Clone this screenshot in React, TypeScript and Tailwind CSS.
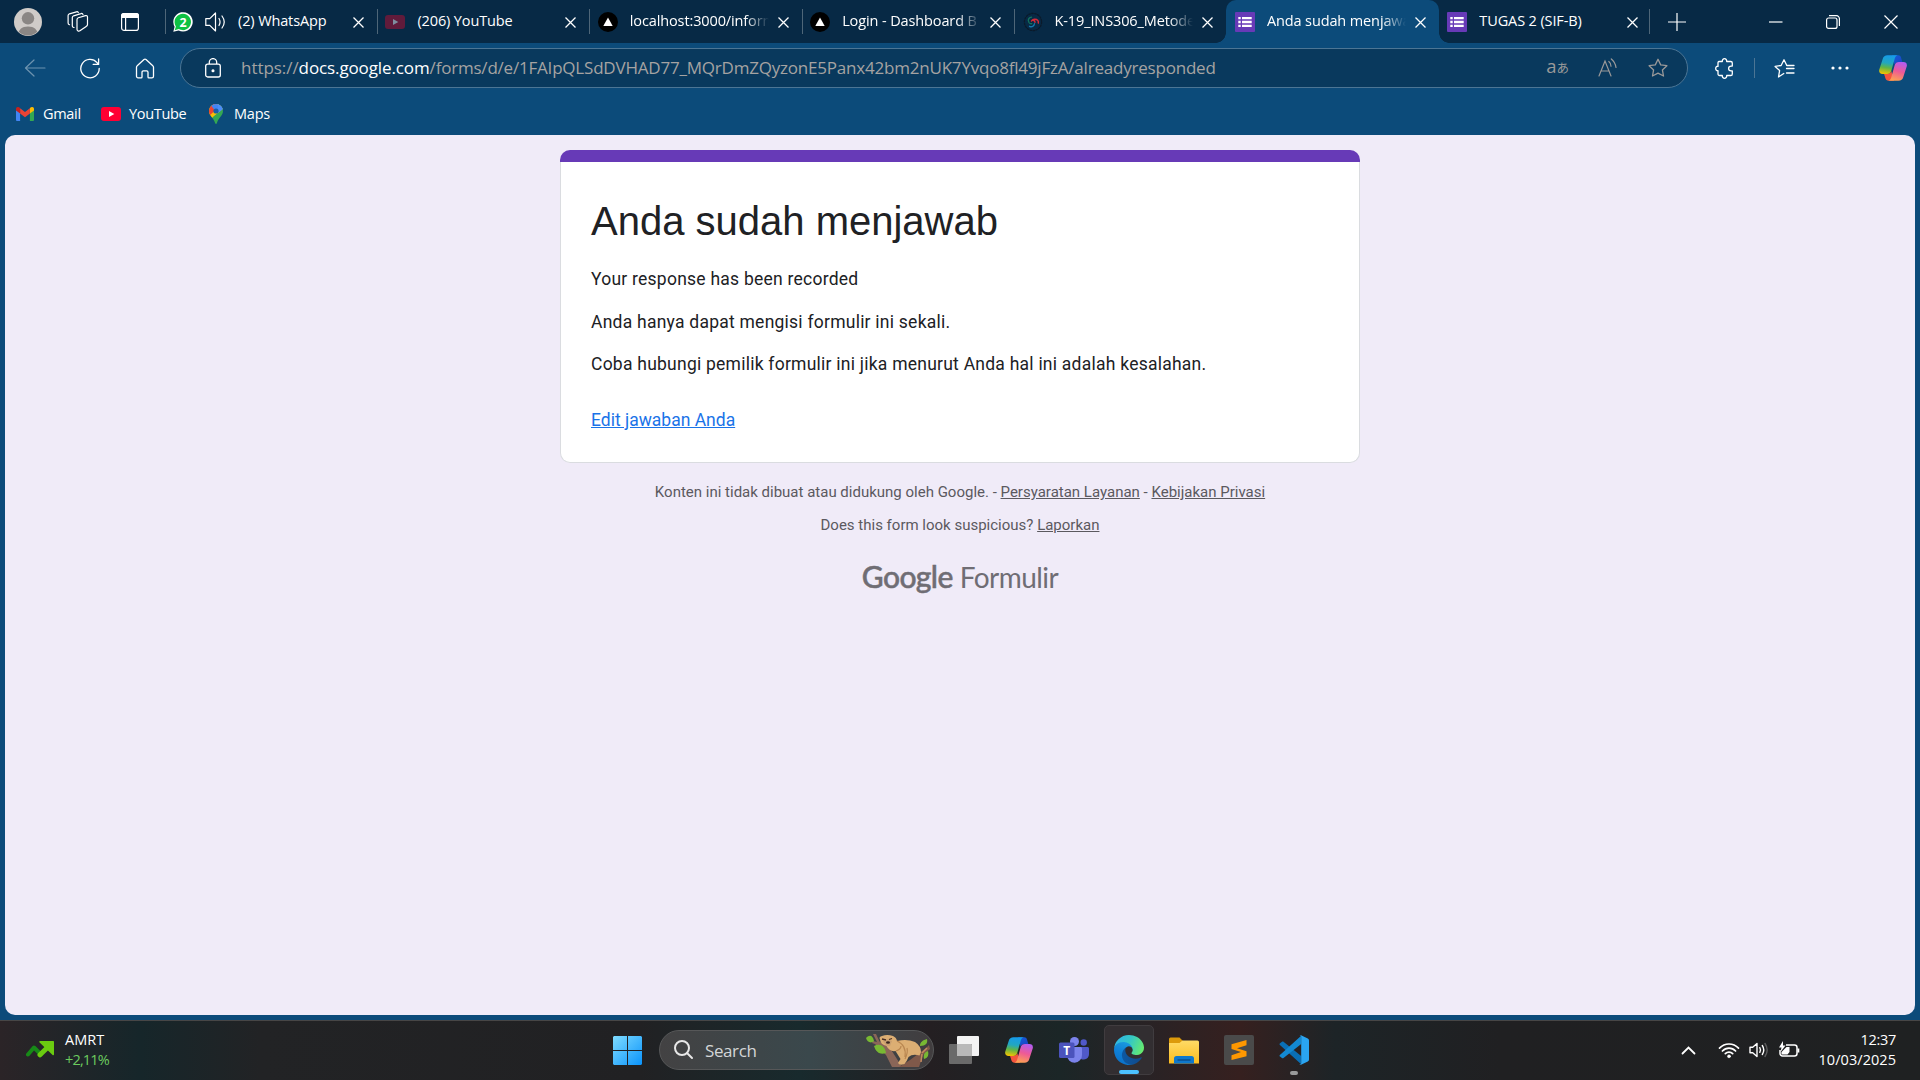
import React from "react";

const UI = "font-['Open_Sans','Noto_Sans','Noto_Sans_CJK_JP',sans-serif]";

function Close() {
  return (
    <svg width="11" height="11" viewBox="0 0 11 11" stroke="#fff" strokeWidth="1.3" fill="none">
      <path d="M.5.5l10 10M10.5.5l-10 10" />
    </svg>
  );
}

function WhatsApp() {
  return (
    <svg width="20" height="20" viewBox="0 0 20 20">
      <path d="M.3 19.700l1.300-5A9.700 9.700 0 1 1 5.600 18.500z" fill="#fff" />
      <path d="M1.700 18.300l1.200-3.900A8.200 8.200 0 1 1 5.800 17.100z" fill="#0dc143" />
      <text x="10" y="14.500" textAnchor="middle" fontSize="12.500" fontWeight="700" fill="#fff" fontFamily="Open Sans, sans-serif">2</text>
    </svg>
  );
}
function Speaker() {
  return (
    <svg width="21" height="20" viewBox="0 0 21 20" fill="none" stroke="#fff" strokeWidth="1.200" strokeLinejoin="round" strokeLinecap="round">
      <path d="M.8 6.600h4L10.500 1v18l-5.700-5.600h-4z" />
      <path d="M14 6.500c1.300 2.200 1.300 4.800 0 7M17 4c2.700 3.600 2.700 8.400 0 12" />
    </svg>
  );
}
function YouTube({ dim = false }: { dim?: boolean }) {
  return (
    <svg width="20" height="14" viewBox="0 0 20 14">
      <rect width="20" height="14" rx="3" fill={dim ? "#611b3b" : "#ff0033"} />
      <path d="M8 4l5.300 3L8 10z" fill={dim ? "#7f8ea0" : "#fff"} />
    </svg>
  );
}
function Next() {
  return (
    <svg width="20" height="20" viewBox="0 0 20 20">
      <circle cx="10" cy="10" r="10" fill="#000" />
      <path d="M10 5.500l4.700 8.500H5.300z" fill="#fff" />
    </svg>
  );
}
function Swirl() {
  return (
    <svg width="20" height="20" viewBox="0 0 20 20" fill="none" strokeLinecap="round">
      <circle cx="10" cy="10" r="8.600" stroke="#0b1a2a" strokeWidth="1.300" strokeDasharray="1.500 1.500" />
      <path d="M8.500 5.200C5.500 5.800 4.500 8 6 10.500c.6.900 1.700 1.400 2.800 1.200" stroke="#11735c" strokeWidth="1.300" />
      <path d="M8.500 9c1-2 4.500-2.600 6.300-.6.700.8.700 1.700.5 2.600M10.300 8.300c1.100.2 1.700.9 1.700 1.900" stroke="#d42a38" strokeWidth="1.500" />
      <path d="M6.500 14.300c2.300 1.200 4.600-.1 5-2.600" stroke="#1478ad" strokeWidth="1.300" />
    </svg>
  );
}
function Forms() {
  return (
    <svg width="20" height="20" viewBox="0 0 20 20">
      <rect width="20" height="20" rx="1" fill="#673ab7" />
      <path d="M3.300 5h2.400v2.300H3.300zM7 5h9.700v2.300H7zM3.300 8.800h2.400v2.400H3.300zM7 8.800h9.700v2.400H7zM3.300 12.700h2.400V15H3.300zM7 12.700h9.700V15H7z" fill="#fff" />
    </svg>
  );
}

type TabProps = { icon: React.ReactNode; title: string; active?: boolean; audio?: boolean; sep?: boolean; fade?: boolean };
function Tab({ icon, title, active, audio, sep = true, fade }: TabProps) {
  return (
    <div className={"relative flex h-[43px] w-[212.400px] shrink-0 items-center " + (active ? "rounded-t-[10px] bg-[#0c4b7a]" : "")}>
      {active && (
        <>
          <span className="absolute bottom-0 -left-[10px] size-[10px] bg-[radial-gradient(circle_at_0_0,transparent_9.500px,#0c4b7a_10px)]" />
          <span className="absolute -right-[10px] bottom-0 size-[10px] bg-[radial-gradient(circle_at_100%_0,transparent_9.500px,#0c4b7a_10px)]" />
        </>
      )}
      <span className={"h-[25px] w-px " + (sep && !active ? "bg-[#4e6678]" : "")} />
      <span className="ml-[7.500px] flex w-5 justify-center">{icon}</span>
      {audio && <span className="ml-3"><Speaker /></span>}
      <span className={"-mt-px ml-[12px] flex-1 overflow-hidden whitespace-nowrap text-[14.500px] leading-[22px] tracking-[-0.120px] text-white " + (fade ? "[mask-image:linear-gradient(to_right,#000_calc(100%-24px),transparent)]" : "")}>
        {title}
      </span>
      <span className="ml-[9px] mr-[13px] mt-px"><Close /></span>
    </div>
  );
}

function Copilot({ id, w = 28 }: { id: string; w?: number }) {
  return (
    <svg width={w} height={(w * 26) / 28} viewBox="0 0 28 26">
      <defs>
        <linearGradient id={id + "a"} x1=".4" y1="0" x2=".25" y2="1">
          <stop offset="0" stopColor="#169be8" /><stop offset=".4" stopColor="#22a7c0" /><stop offset=".65" stopColor="#5fb548" /><stop offset="1" stopColor="#f5c400" />
        </linearGradient>
        <linearGradient id={id + "b"} x1=".7" y1="0" x2=".4" y2="1">
          <stop offset="0" stopColor="#b35cf0" /><stop offset=".5" stopColor="#ee5a96" /><stop offset="1" stopColor="#fda054" />
        </linearGradient>
        <linearGradient id={id + "c"} x1="0" y1="0" x2="1" y2="1">
          <stop offset="0" stopColor="#1560d8" /><stop offset="1" stopColor="#1b3fc4" />
        </linearGradient>
      </defs>
      <path d="M13 .3h6.200c1.500 0 2.400.8 2.800 2.200l1.300 4.600h-4c-2 0-3 1-3.600 2.800z" fill={"url(#" + id + "c)"} />
      <path d="M15 25.700H9.500c-1.700 0-2.600-1-3.100-2.500L5 18.700h3.500c2 0 3.200-1 3.800-2.800z" fill="#f5553d" />
      <path d="M8.500.3h10.200c-1.700.4-2.500 1.700-3 3.500l-3.300 11.700c-.7 2.300-2 3.400-4.300 3.400H3.600c-2.700 0-4-1.700-3.300-4.500L3.700 4C4.400 1.500 6 .3 8.500.3z" fill={"url(#" + id + "a)"} />
      <path d="M19.900 7.100h4.500c2.700 0 4 1.700 3.300 4.500L24.300 22c-.7 2.500-2.300 3.700-4.800 3.700H9.300c1.700-.4 2.500-1.700 3-3.500l3.300-11.700c.7-2.300 2-3.400 4.300-3.400z" fill={"url(#" + id + "b)"} />
    </svg>
  );
}

function Sloth() {
  return (
    <svg width="64" height="33" viewBox="0 0 64 33">
      <path d="M7 0h3l3.500 7.500L24 14l12 19H26l-6-12L9 10l-3-1 1-2 4 1z" fill="#8a6658" />
      <path d="M33 33l11-7 16-12 3-3 1 4-7 6-4 12z" fill="#80594a" />
      <path d="M56 20l-1 8M61 14l-5 5" stroke="#c28a60" strokeWidth="1.500" fill="none" />
      <path d="M14 5.500q-1.500-3 2-3.500 5-2 11 0 3.500 1.500 4 5 10-2.500 18 1 6 4 6 10l-1.500 3.500q-7-2-11 1.500-1.500 4-4 7-5 2-6.500-1l2.500-4-5-8q-6 1-9-5-6-1.500-6.500-6.500z" fill="#dcae73" />
      <path d="M31 7c7 3 9 9 8 16M41 14c1 4 0 7-2 11M30 17c3-1 5-3 5-5" fill="none" stroke="#b98650" strokeWidth="1.200" />
      <path d="M17 7q4-3 9 0l-2 5q-4 1-7-5z" fill="#c99f70" />
      <path d="M16 5l4 1M23 5.500l3-1" stroke="#4a3026" strokeWidth="1.300" />
      <ellipse cx="22" cy="8.500" rx="2" ry="1.300" fill="#3b2520" />
      <path d="M0 4c4-4 7-2 8 3-3 3-7 1-8-3zM8 12c6-3 11 0 12 7-5 2-10 0-12-7zM54 12c0-4 3-6 7-7 1 4-1 7-7 7zM58 25c-1-5 1-7 4-8 1 4 0 7-4 8z" fill="#78b833" />
    </svg>
  );
}

function Teams() {
  return (
    <svg width="30" height="26" viewBox="0 0 30 26">
      <circle cx="15.500" cy="4.500" r="4.500" fill="#7b83eb" />
      <circle cx="24.700" cy="5.500" r="3.200" fill="#5059c9" />
      <path d="M20 10h8.500c.8 0 1.500.7 1.500 1.500v5.500a5.500 5.500 0 0 1-8 5z" fill="#5059c9" />
      <path d="M9 10h12.500c.8 0 1.500.7 1.500 1.500V18a7.500 7.500 0 0 1-15 .5z" fill="#7b83eb" />
      <rect y="5.500" width="15.500" height="15.500" rx="1.500" fill="#4b53bc" />
      <text x="7.700" y="17.600" textAnchor="middle" fontSize="12" fontWeight="700" fill="#fff" fontFamily="Open Sans, sans-serif">T</text>
    </svg>
  );
}

function Edge() {
  return (
    <svg width="30" height="30" viewBox="0 0 256 256">
      <defs>
        <linearGradient id="e1" x1="0" y1=".5" x2="1" y2=".5"><stop offset="0" stopColor="#0c59a4" /><stop offset="1" stopColor="#114a8b" /></linearGradient>
        <linearGradient id="e2" x1=".6" y1="0" x2=".3" y2="1"><stop offset="0" stopColor="#1b9de2" /><stop offset=".5" stopColor="#0f7fd6" /><stop offset="1" stopColor="#0a6fc6" /></linearGradient>
        <linearGradient id="e3" x1="0" y1=".3" x2="1" y2=".6"><stop offset="0" stopColor="#2fb5e8" /><stop offset=".5" stopColor="#35c8c4" /><stop offset="1" stopColor="#66eb6e" /></linearGradient>
      </defs>
      <path d="M231 190.500c-3.400 1.800-6.900 3.400-10.500 4.700a101 101 0 0 1-35.900 6.500c-47.300 0-88.500-32.500-88.500-74.300.1-11.400 6.400-21.900 16.400-27.300-42.800 1.800-53.800 46.400-53.800 72.500 0 73.900 68.100 81.400 82.800 81.400 7.900 0 19.800-2.300 27-4.600l1.300-.4a128.300 128.300 0 0 0 66.600-52.800 4 4 0 0 0-5.400-5.700z" fill="url(#e1)" />
      <path d="M105.700 241.400a79.200 79.200 0 0 1-22.700-21.300 80.700 80.700 0 0 1 29.500-120c3.200-1.500 8.500-4.100 15.600-4a32.400 32.400 0 0 1 25.700 13 31.900 31.900 0 0 1 6.300 18.700c0-.2 24.500-79.600-80-79.600C36.200 48.200.1 89.900.1 126.600a130 130 0 0 0 12.100 56 128 128 0 0 0 156.400 67.100 75.500 75.500 0 0 1-62.800-8z" fill="url(#e2)" />
      <path d="M152.300 148.900c-.9 1-3.400 2.500-3.400 5.600 0 2.600 1.700 5.200 4.800 7.300 14.400 10.100 41.600 8.700 41.700 8.700 10.700 0 21.200-2.900 30.400-8.300A61.800 61.800 0 0 0 256 109c.3-22.400-8-37.300-11.300-43.900C223.500 23.900 177.700 0 128 0A128 128 0 0 0 0 126.200c.5-36.500 36.800-66 80-66 3.500 0 23.500.3 42 10 16.300 8.500 24.900 18.900 30.800 29.200 6.200 10.700 7.300 24.100 7.300 29.500 0 5.300-2.700 13.300-7.800 20z" fill="url(#e3)" />
    </svg>
  );
}

function Folder() {
  return (
    <svg width="30" height="27" viewBox="0 0 30 27">
      <defs><linearGradient id="fo" x1="0" y1="0" x2="0" y2="1"><stop offset="0" stopColor="#ffdb66" /><stop offset="1" stopColor="#fbbc1f" /></linearGradient></defs>
      <path d="M0 2a1.500 1.500 0 0 1 1.500-1.500h9L14 4H29v6H0z" fill="#dc9a0b" />
      <path d="M0 6h10.500L13.500 3.500H28.500A1.500 1.500 0 0 1 30 5v21.500H0z" fill="url(#fo)" />
      <path d="M5 26.500v-5A2.500 2.500 0 0 1 7.500 19h15a2.500 2.500 0 0 1 2.500 2.500v5z" fill="#0f78cc" />
      <path d="M8.500 23h13" stroke="#0a4a86" strokeWidth="1.300" />
    </svg>
  );
}

function VSCode() {
  return (
    <svg width="30" height="30" viewBox="0 0 30 30">
      <path d="M1 8.300l2-1.500c.5-.4 1-.3 1.500 0L22.200 21v8.300L.9 10c-.6-.6-.5-1.200.1-1.700z" fill="#0a6fb5" />
      <path d="M1 21.500l2 1.600c.5.4 1 .3 1.500 0L22.200 9V.7L.9 20c-.6.600-.5 1.100.1 1.500z" fill="#1389d2" />
      <path d="M22 .3L28.800 3.500c.8.400 1.200 1 1.200 1.900v19.200c0 .9-.4 1.500-1.200 1.900L22 29.700c-.8.300-1.500 0-2-.5 1 .6 2.200.1 2.200-1.200V2c0-1.300-1.200-1.800-2.200-1.200.5-.6 1.200-.8 2-.5z" fill="#2aa5f2" />
    </svg>
  );
}

const star = "M10 1.300l2.700 5.600 6.200.8-4.500 4.200 1.100 6.100L10 15.100 4.500 18l1.100-6.100L1.100 7.700l6.200-.8z";

export default function App() {
  return (
    <div className={"flex h-[1080px] w-[1920px] flex-col overflow-hidden bg-[#0c4b7a] text-white " + UI}>
      <header className="flex h-[43px] shrink-0 items-center bg-[#072945]">
        <svg className="ml-[14px] shrink-0" width="28" height="28" viewBox="0 0 28 28">
          <defs><clipPath id="av"><circle cx="14" cy="14" r="13.500" /></clipPath></defs>
          <circle cx="14" cy="14" r="14" fill="#cfcbc8" />
          <g clipPath="url(#av)" fill="#8a8684"><circle cx="14" cy="10.300" r="6.200" /><path d="M4 28c0-6.500 4-9.500 10-9.500s10 3 10 9.500z" /></g>
        </svg>
        <svg className="ml-[25px] shrink-0" width="22" height="22" viewBox="0 0 22 22" fill="none" stroke="#fff" strokeWidth="1.200" strokeLinejoin="round" strokeLinecap="round">
          <path d="M11.300 6.800l7.200-2.200c1-.3 2 .4 2 1.500v7.500c0 .8-.5 1.500-1.300 1.800l-6.300 4.400c-1.200.8-2.900 0-2.900-1.500V8.600c0-.8.500-1.500 1.300-1.800z" />
          <path d="M7 16.500l-.8-.3c-.6-.3-.9-.8-.9-1.400V6.600c0-.8.500-1.500 1.300-1.800L14 2.600c.9-.3 1.700.1 2 1M2.500 13.700c-.9-.3-1.400-.8-1.400-1.700V4.600c0-.8.500-1.500 1.300-1.800L9.500.8c.8-.2 1.400 0 1.800.7" />
        </svg>
        <svg className="ml-[32px] shrink-0" width="18" height="18" viewBox="0 0 18 18">
          <rect x=".6" y=".6" width="16.800" height="16.800" rx="2.500" fill="none" stroke="#fff" strokeWidth="1.200" />
          <path d="M0 5V2.500A2.500 2.500 0 0 1 2.500 0h13A2.500 2.500 0 0 1 18 2.500V5zM4 5h1.200v12.500H4z" fill="#fff" />
        </svg>
        <nav className="ml-[25.500px] flex">
          <Tab icon={<WhatsApp />} title="(2) WhatsApp" audio />
          <Tab icon={<YouTube dim />} title="(206) YouTube" />
          <Tab icon={<Next />} title="localhost:3000/inform" fade />
          <Tab icon={<Next />} title="Login - Dashboard B" fade />
          <Tab icon={<Swirl />} title="K-19_INS306_Metode" fade />
          <Tab icon={<Forms />} title="Anda sudah menjawab" active fade />
          <Tab icon={<Forms />} title="TUGAS 2 (SIF-B)" sep={false} />
        </nav>
        <span className="-ml-[2.500px] h-[25px] w-px bg-[#4e6678]" />
        <svg className="ml-[18px] shrink-0" width="18" height="18" viewBox="0 0 18 18" stroke="#fff" strokeWidth="1.200"><path d="M9 0v18M0 9h18" /></svg>
        <div className="ml-auto flex items-center">
          <svg className="mr-[43px]" width="14" height="13" viewBox="0 0 14 13"><path d="M0 7h13.500" stroke="#fff" strokeWidth="1.200" /></svg>
          <svg className="mr-[44px]" width="14" height="14" viewBox="0 0 14 14" fill="none" stroke="#fff" strokeWidth="1.200">
            <rect x=".6" y="3" width="10.400" height="10.400" rx="2" /><path d="M3 .7h7.500a2.900 2.900 0 0 1 2.900 2.900v7.400" />
          </svg>
          <svg className="mr-[22px]" width="14" height="14" viewBox="0 0 14 14" stroke="#fff" strokeWidth="1.200"><path d="M.5.5l13 13M13.500.5l-13 13" /></svg>
        </div>
      </header>

      <div className="flex h-[50px] shrink-0 items-center">
        <svg className="ml-[24px] shrink-0" width="22" height="20" viewBox="0 0 22 20" fill="none" stroke="#6d93af" strokeWidth="1.200" strokeLinecap="round" strokeLinejoin="round"><path d="M10 2L1.500 10l8.500 8M1.500 10H21" /></svg>
        <svg className="ml-[34px] shrink-0" width="20" height="21" viewBox="0 0 20 21" fill="none" stroke="#fff" strokeWidth="1.300" strokeLinecap="round" strokeLinejoin="round"><path d="M19.200 10.500A9.200 9.200 0 1 1 17 4.600L18.500 6.300M18.600 1v5.400h-5.400" /></svg>
        <svg className="ml-[35px] shrink-0" width="20" height="21" viewBox="0 0 20 21" fill="none" stroke="#fff" strokeWidth="1.300" strokeLinejoin="round"><path d="M1.500 9.300c0-.6.200-1.100.7-1.500L9 1.600c.6-.5 1.400-.5 2 0l6.800 6.200c.5.400.7.900.7 1.500v8.900c0 .9-.7 1.600-1.600 1.600h-3c-.5 0-.9-.4-.9-.9v-4.700c0-.8-.6-1.400-1.400-1.400H8.400c-.8 0-1.400.6-1.400 1.400v4.700c0 .5-.4.9-.9.9h-3c-.9 0-1.600-.7-1.600-1.600z" /></svg>
        <div className="ml-[25px] flex h-[40px] w-[1508px] shrink-0 items-center rounded-full border border-[#4c7594] bg-[#09395d]">
          <svg className="ml-[24px] shrink-0" width="16" height="20" viewBox="0 0 16 20" fill="none" stroke="#fff" strokeWidth="1.300"><rect x=".7" y="6.200" width="14.600" height="12.800" rx="2" /><path d="M4.300 6V4.300a3.700 3.700 0 0 1 7.400 0V6" /><circle cx="8" cy="12.700" r=".9" fill="#fff" /></svg>
          <p className="ml-[20px] whitespace-nowrap text-[17px] leading-6 text-[#a5a3a2]">
            <span className="tracking-[-0.050px]">https://</span><span className="tracking-[-0.110px] text-white">docs.google.com</span><span className="tracking-[-0.205px]">/forms/d/e/1FAIpQLSdDVHAD77_MQrDmZQyzonE5Panx42bm2nUK7Yvqo8fl49jFzA/alreadyresponded</span>
          </p>
          <div className="ml-auto flex shrink-0 items-center text-[#9a9999]">
            <span className="-mt-[3px] mr-[29px] flex items-baseline leading-5"><span className="text-[18.500px]">a</span><span className="font-['Noto_Sans_CJK_JP',sans-serif] text-[12.500px]">あ</span></span>
            <svg className="mr-[30px]" width="20" height="20" viewBox="0 0 20 20" fill="none" stroke="#9a9999" strokeWidth="1.200" strokeLinecap="round"><path d="M1 18L7 3l6 15M3 13h8M10.800 3.500c1.500 1.200 2.200 2.800 2.200 4.700M13.300 1c2.700 2.200 4.200 5 4.700 8.500" /></svg>
            <svg className="mr-[19px]" width="20" height="20" viewBox="0 0 20 20" fill="none" stroke="#9a9999" strokeWidth="1.300" strokeLinejoin="round"><path d={star} /></svg>
          </div>
        </div>
        <svg className="ml-[27px] shrink-0" width="20" height="21" viewBox="0 0 20 21" fill="none" stroke="#fff" strokeWidth="1.300" strokeLinejoin="round"><path d="M4 3.500h3.300c-.2-1.700.9-2.800 2.200-2.800s2.400 1.100 2.200 2.800h4c1 0 1.600.7 1.600 1.600v3h-1.200c-1.500 0-2.500 1-2.500 2.400s1 2.400 2.500 2.400h1.200v3c0 1-.7 1.600-1.600 1.600h-4c.2 1.700-.9 2.800-2.200 2.800s-2.400-1.100-2.200-2.800H4.600c-1 0-1.600-.7-1.600-1.600v-3.200C1.700 12.900.7 11.900.7 10.500S1.700 8.100 3 8.300V5.100c0-.9.400-1.600 1-1.600z" /></svg>
        <span className="ml-[19px] h-5 w-px bg-[#4c7594]" />
        <svg className="ml-[19px] shrink-0" width="21" height="21" viewBox="0 0 21 21" fill="none" stroke="#fff" strokeWidth="1.300" strokeLinejoin="round" strokeLinecap="round"><path d="M9.800 15L4.500 18.500l1.100-6.400L1.100 7.900l6-.9L10 1.300l2.800 5.700h.7M12.500 10H20M12.500 14.500H20M12.500 6.800l7.500.2" transform="translate(0 .5)" /></svg>
        <svg className="ml-[35.500px] shrink-0" width="18" height="4" viewBox="0 0 18 4" fill="#fff"><circle cx="2" cy="2" r="1.600" /><circle cx="9" cy="2" r="1.600" /><circle cx="16" cy="2" r="1.600" /></svg>
        <span className="ml-[30px] shrink-0"><Copilot id="c1" /></span>
      </div>

      <div className="flex h-[42px] shrink-0 items-center pb-px text-[14.500px] leading-5">
        <svg className="ml-[16px]" width="18" height="14" viewBox="0 0 18 14">
          <path d="M0 2.500v10.200c0 .7.500 1.300 1.200 1.300h2.900V6z" fill="#4285f4" /><path d="M13.900 14h2.900c.7 0 1.200-.6 1.200-1.300V2.500L13.900 6z" fill="#34a853" />
          <path d="M13.900 1.200V6.500L18 3.400V2c0-2-2.100-2.600-3.500-1.400z" fill="#fbbc04" /><path d="M4.100 6.500V1.200L9 4.900l4.900-3.700v5.300L9 10.200z" fill="#ea4335" /><path d="M0 2v1.400l4.100 3.100V1.200L3.500.6C2.100-.6 0 0 0 2z" fill="#c5221f" />
        </svg>
        <span className="ml-[9px] w-[58px] tracking-[-0.300px]">Gmail</span>
        <YouTube />
        <span className="ml-[8px] w-[80px] tracking-[-0.330px]">YouTube</span>
        <svg width="14" height="20" viewBox="0 0 14 20">
          <defs><clipPath id="pin"><path d="M7 0a7 7 0 0 1 7 7c0 4.500-4 6-6.200 12.200-.3 1-1.300 1-1.600 0C4 13 0 11.500 0 7a7 7 0 0 1 7-7z" /></clipPath></defs>
          <g clipPath="url(#pin)"><path d="M0 0h14v20H0z" fill="#34a853" /><path d="M0 0h14v5L5 12l-3 3-2-2z" fill="#fbbc04" /><path d="M0 0h8L4.500 8 1 11H0z" fill="#ea4335" /><path d="M2 1.500L4 0h10v5L8 9z" fill="#4285f4" /><path d="M9 0l5 0v5L9 9z" fill="#4a8df8" /></g>
          <circle cx="7" cy="7" r="2.600" fill="#1a5ea8" />
        </svg>
        <span className="ml-[11px] tracking-[-0.200px]">Maps</span>
      </div>

      <main className="mx-[5px] flex h-[880px] shrink-0 flex-col items-center rounded-[10px] bg-[#f0ebf8] font-[Roboto,sans-serif]">
        <section className="mt-[15px] h-[313px] w-[800px] shrink-0">
          <div className="h-[12px] rounded-t-[10px] bg-[#673ab7]" />
          <div className="flex h-[301px] flex-col items-start rounded-b-[10px] border border-t-0 border-[#dadce0] bg-white px-[30px] text-[17.500px] leading-[25px] text-[#202124]">
            <h1 className="mt-[34px] font-['Liberation_Sans',Arial,sans-serif] text-[40px] leading-[50px]">Anda sudah menjawab</h1>
            <p className="mt-[21px] tracking-[0.240px]">Your response has been recorded</p>
            <p className="mt-[18px] tracking-[0.240px]">Anda hanya dapat mengisi formulir ini sekali.</p>
            <p className="mt-[17px] tracking-[0.240px]">Coba hubungi pemilik formulir ini jika menurut Anda hal ini adalah kesalahan.</p>
            <a className="mt-[31px] text-[#1a73e8] underline">Edit jawaban Anda</a>
          </div>
        </section>
        <p className="mt-[17px] text-[15px] leading-6 text-[#5b595f]">Konten ini tidak dibuat atau didukung oleh Google. - <a className="underline">Persyaratan Layanan</a> - <a className="underline">Kebijakan Privasi</a></p>
        <p className="mt-[9px] text-[15px] leading-6 text-[#5b595f]">Does this form look suspicious? <a className="underline">Laporkan</a></p>
        <div className="mt-[17px] flex items-baseline gap-[7px] font-[Lato,sans-serif] leading-[44px] text-[#6f6d74]">
          <span className="text-[30px] font-medium tracking-[-0.600px] [-webkit-text-stroke:0.500px_#6f6d74]">Google</span>
          <span className="text-[28px] tracking-[-0.550px]">Formulir</span>
        </div>
      </main>

      <footer className="mt-[5px] flex h-[60px] shrink-0 items-center border-t border-[#474646] bg-[linear-gradient(90deg,#2b2427_0px,#16262a_140px,#222325_260px,#212123_640px,#182a2d_800px,#241f22_930px,#1b2627_1060px,#262326_1130px,#36201f_1240px,#1d2427_1335px,#202022_1500px,#1f2122_1920px)] pb-px">
        <svg className="-mt-[2px] ml-[26px] shrink-0" width="28" height="17" viewBox="0 0 28 17">
          <path d="M2 13.500L8 6.500l7 7" stroke="#178a17" strokeWidth="4" fill="none" strokeLinejoin="round" strokeLinecap="round" />
          <path d="M14 13.800L22 6" stroke="#6bcb10" strokeWidth="5" strokeLinecap="round" /><path d="M14 0h13c.6 0 1 .4 1 1v12.500c0 .8-1 1-1.400.4L13.600 1.400C13 .8 13.300 0 14 0z" fill="#6bcb10" />
        </svg>
        <div className="-mt-px ml-[11px] w-[548px] text-[14.500px] leading-5">
          <div>AMRT</div><div className="tracking-[-0.850px] text-[#6ccb5f]">+2,11%</div>
        </div>
        <svg className="shrink-0" width="29" height="29" viewBox="0 0 29 29">
          <defs><linearGradient id="wi" x1="0" y1="0" x2="1" y2="1"><stop offset="0" stopColor="#7fdcff" /><stop offset="1" stopColor="#0a93fb" /></linearGradient></defs>
          <path d="M1 0h13v14H0V1zM15 0h13l1 1v13H15zM0 15h14v14H1l-1-1zM15 15h14v13l-1 1H15z" fill="url(#wi)" />
        </svg>
        <div className="ml-[17px] flex h-10 w-[275px] shrink-0 items-center rounded-full border border-[#565758] bg-[linear-gradient(90deg,#434243,#3a484c_55%,#413d3f)]">
          <svg className="ml-[14px]" width="20" height="20" viewBox="0 0 20 20" fill="none" stroke="#e8e8e8" strokeWidth="2" strokeLinecap="round"><circle cx="8" cy="8" r="7" /><path d="M13 13l5 5" /></svg>
          <span className="ml-[11px] mt-px text-[17px] leading-6 tracking-[-0.400px] text-[#d4d6d7]">Search</span>
          <span className="ml-auto mr-[3px]"><Sloth /></span>
        </div>
        <div className="ml-[2px] flex">
          <span className="flex w-[55px] items-center justify-center">
            <svg width="30" height="28" viewBox="0 0 30 28"><rect x="8" width="22" height="20" rx="1" fill="#f3f3f3" /><rect y="8" width="23" height="20" rx="1" fill="#6a6a6a" /><path d="M8 8h14a1 1 0 0 1 1 1v11H8z" fill="#b9b9b9" /></svg>
          </span>
          <span className="flex w-[55px] items-center justify-center"><Copilot id="c2" /></span>
          <span className="flex w-[55px] items-center justify-center"><Teams /></span>
          <span className="flex w-[55px] items-center justify-center">
            <span className="flex h-[50px] w-[50px] flex-col items-center justify-between rounded-[5px] border border-[#403c3f] bg-[#322e31] pt-[9px]"><Edge /><span className="h-1 w-5 rounded-full bg-[#4cc2ff]" /></span>
          </span>
          <span className="flex w-[55px] items-center justify-center"><Folder /></span>
          <span className="flex w-[55px] items-center justify-center">
            <svg width="30" height="30" viewBox="0 0 30 30"><rect width="30" height="30" rx="2" fill="#4a4a4a" /><path d="M22.500 5v5.200L13 13.300l9.500 3v4.900L7.500 25v-4.800l9.500-3.100-9.500-3.200V9.300z" fill="#ff9800" /></svg>
          </span>
          <span className="flex w-[55px] flex-col items-center justify-between pt-[10px]"><VSCode /><span className="h-1 w-2 rounded-full bg-[#9a9a9a]" /></span>
        </div>
        <div className="ml-auto flex items-center">
          <svg className="mr-[22px]" width="15" height="9" viewBox="0 0 15 9" fill="none" stroke="#fff" strokeWidth="1.800" strokeLinecap="round"><path d="M1.500 7.500l6-6 6 6" /></svg>
          <svg width="22" height="17" viewBox="0 0 22 17" fill="none" stroke="#fff" strokeWidth="1.700" strokeLinecap="round"><path d="M1.500 6.200c5.300-5.600 13.700-5.600 19 0M4.400 9c3.700-3.900 9.500-3.900 13.200 0M7.300 11.700c2.100-2.200 5.300-2.200 7.400 0" /><circle cx="11" cy="14.300" r="1.500" fill="#fff" strokeWidth=".5" /></svg>
          <svg className="ml-[9px]" width="20" height="18" viewBox="0 0 20 18" fill="none" stroke="#fff" strokeWidth="1.400" strokeLinecap="round" strokeLinejoin="round"><path d="M1 6.300h2.700L8 2.500v13l-4.300-3.800H1z" /><path d="M10.800 6.700c.9 1.500.9 3.100 0 4.600M13.300 4.500c1.900 2.900 1.900 6.100 0 9" /><path d="M16 2.500c2.900 4.300 2.900 8.700 0 13" stroke="#5b5c5d" /></svg>
          <svg className="ml-[10px]" width="21" height="18" viewBox="0 0 21 18"><path d="M7 4h8.500A2.500 2.500 0 0 1 18 6.500v6a2.500 2.500 0 0 1-2.500 2.500h-12A2.500 2.500 0 0 1 1 12.500V9" fill="none" stroke="#fff" strokeWidth="1.500" /><path d="M18.500 7.500h1.800v4h-1.800zM4 0L0 6.500h2.500L1.500 11 6.500 4.500H4zM2.500 13.500V11l5-5h3v5l-2 2.500z" fill="#fff" /></svg>
          <div className="-mt-px ml-[19px] mr-[24px] text-right text-[14.500px] leading-5"><div className="tracking-[-0.300px]">12:37</div><div className="tracking-[0.050px]">10/03/2025</div></div>
        </div>
      </footer>
    </div>
  );
}
